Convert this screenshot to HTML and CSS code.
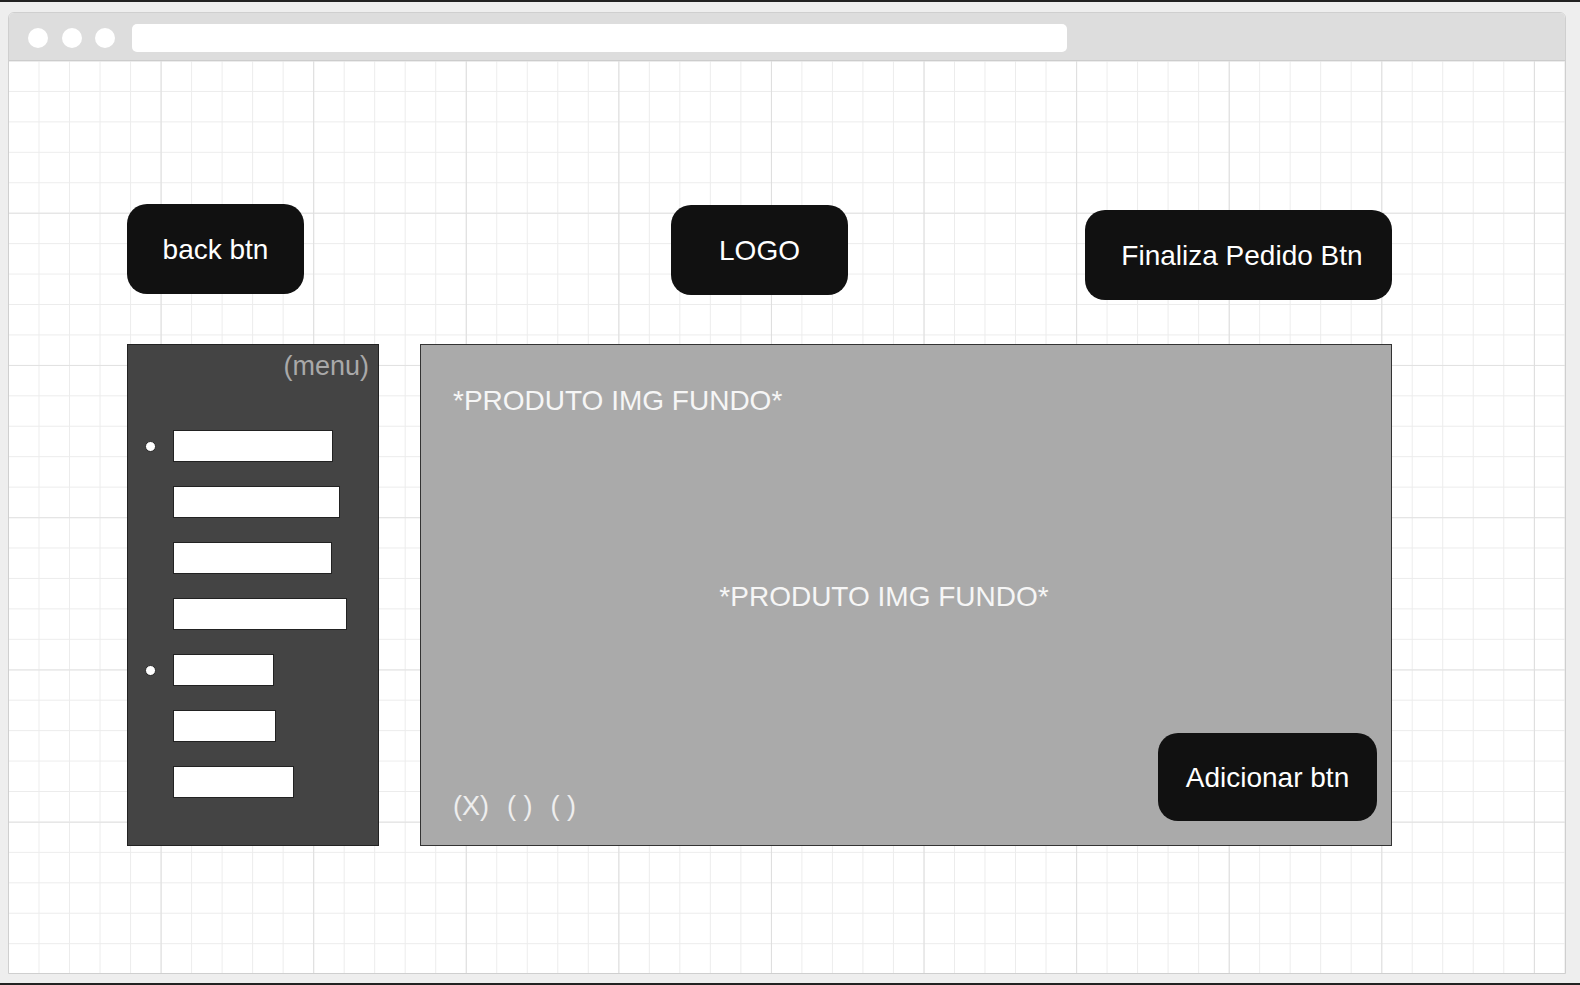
FILE: index.html
```html
<!DOCTYPE html>
<html lang="pt">
<head>
<meta charset="utf-8">
<title>Wireframe</title>
<link rel="stylesheet" href="styles.css">
</head>
<body>
<div class="screen">
  <div class="window">
    <div class="titlebar">
      <span class="light"></span>
      <span class="light"></span>
      <span class="light"></span>
      <div class="address"></div>
    </div>
    <div class="canvas">
      <header class="topbar">
        <div class="btn btn-back">back btn</div>
        <div class="btn btn-logo">LOGO</div>
        <div class="btn btn-finish">Finaliza Pedido Btn</div>
      </header>
      <main class="main">
        <aside class="menu">
          <div class="menu-title">(menu)</div>
          <ul class="menu-list">
            <li class="menu-row"><span class="bullet"></span><span class="bar w1"></span></li>
            <li class="menu-row"><span class="no-bullet"></span><span class="bar w2"></span></li>
            <li class="menu-row"><span class="no-bullet"></span><span class="bar w3"></span></li>
            <li class="menu-row"><span class="no-bullet"></span><span class="bar w4"></span></li>
            <li class="menu-row"><span class="bullet"></span><span class="bar w5"></span></li>
            <li class="menu-row"><span class="no-bullet"></span><span class="bar w6"></span></li>
            <li class="menu-row"><span class="no-bullet"></span><span class="bar w7"></span></li>
          </ul>
        </aside>
        <section class="product">
          <div class="product-title">*PRODUTO IMG FUNDO*</div>
          <div class="product-center">*PRODUTO IMG FUNDO*</div>
          <div class="product-bottom">
            <div class="options"><span>(X)</span><span>( )</span><span>( )</span></div>
            <div class="btn btn-add">Adicionar btn</div>
          </div>
        </section>
      </main>
    </div>
  </div>
</div>
</body>
</html>
```

FILE: styles.css
```css
html, body {
  margin: 0;
  padding: 0;
}

body {
  background: #eeeeee;
  font-family: "Liberation Sans", Arial, sans-serif;
}

.screen {
  width: 1580px;
  height: 985px;
  box-sizing: border-box;
  border-top: 2px solid #222222;
  border-bottom: 2px solid #222222;
  background: #eeeeee;
  padding: 10px 0 0 8px;
}

.window {
  width: 1558px;
  height: 962px;
  box-sizing: border-box;
  border: 1px solid #cfcfcf;
  border-radius: 6px 6px 0 0;
  display: flex;
  flex-direction: column;
  background: #ffffff;
  overflow: hidden;
}

.titlebar {
  height: 48px;
  box-sizing: border-box;
  flex: none;
  background: #dddddd;
  border-bottom: 1px solid #cccccc;
  display: flex;
  align-items: center;
  padding: 3px 0 0 19px;
}

.light {
  width: 20px;
  height: 20px;
  border-radius: 50%;
  background: #ffffff;
  margin-right: 13.5px;
  flex: none;
}

.light:nth-of-type(3) {
  margin-right: 17px;
}

.address {
  width: 935px;
  height: 28px;
  background: #ffffff;
  border-radius: 5px;
}

.canvas {
  flex: 1;
  background-color: #ffffff;
  background-image:
    linear-gradient(to right, #dedede 1px, transparent 1px),
    linear-gradient(to bottom, #e2e2e2 1px, transparent 1px),
    linear-gradient(to right, #ececec 1px, transparent 1px),
    linear-gradient(to bottom, #ececec 1px, transparent 1px);
  background-size:
    152.6px 100%,
    100% 152.25px,
    30.52px 100%,
    100% 30.45px;
  background-position:
    -1px 0,
    0 -0.5px,
    -1px 0,
    0 -0.5px;
  padding: 143px 173px 0 118px;
}

.topbar {
  display: grid;
  grid-template-columns: 1fr auto 1fr;
  align-items: start;
}

.btn {
  background: #111111;
  color: #ffffff;
  border-radius: 20px;
  font-size: 28px;
  line-height: 32px;
  display: flex;
  align-items: center;
  justify-content: center;
  box-sizing: border-box;
  padding-top: 2px;
  white-space: nowrap;
}

.btn-back {
  justify-self: start;
  width: 177px;
  height: 90px;
}

.btn-logo {
  justify-self: center;
  width: 177px;
  height: 90px;
  margin-top: 1px;
}

.btn-finish {
  justify-self: end;
  width: 307px;
  height: 90px;
  margin-top: 6px;
  padding-left: 7px;
}

.main {
  display: flex;
  gap: 41px;
  margin-top: 44px;
  height: 502px;
}

.menu {
  width: 252px;
  flex: none;
  box-sizing: border-box;
  background: #444444;
  border: 1px solid #222222;
  padding: 6px 9px 0 0;
}

.menu-title {
  text-align: right;
  color: #a9a9a9;
  font-size: 27px;
  line-height: 31px;
}

.menu-list {
  list-style: none;
  margin: 48px 0 0 0;
  padding: 0;
  display: flex;
  flex-direction: column;
  gap: 24px;
}

.menu-row {
  display: grid;
  grid-template-columns: 45px auto;
  align-items: center;
  height: 32px;
}

.bullet {
  justify-self: center;
  width: 11px;
  height: 11px;
  box-sizing: border-box;
  border-radius: 50%;
  background: #ffffff;
  border: 1px solid #2a2a2a;
}

.bar {
  display: block;
  height: 32px;
  box-sizing: border-box;
  background: #ffffff;
  border: 1px solid #222222;
}

.w1 { width: 160px; }
.w2 { width: 167px; }
.w3 { width: 159px; }
.w4 { width: 174px; }
.w5 { width: 101px; }
.w6 { width: 103px; }
.w7 { width: 121px; }

.product {
  flex: 1;
  box-sizing: border-box;
  background: #aaaaaa;
  border: 1px solid #333333;
  display: grid;
  grid-template-columns: 1fr;
  grid-template-rows: 1fr;
}

.product-title,
.product-center,
.product-bottom {
  grid-area: 1 / 1;
}

.product-title {
  align-self: start;
  padding: 40px 32px 0;
  color: #f6f6f6;
  font-size: 28px;
  line-height: 32px;
}

.product-center {
  align-self: center;
  justify-self: center;
  margin: 4px 44px 0 0;
  color: #f6f6f6;
  font-size: 28px;
  line-height: 32px;
}

.product-bottom {
  align-self: end;
  display: flex;
  justify-content: space-between;
  align-items: flex-end;
  padding: 0 14px 24px 32px;
}

.options {
  display: flex;
  gap: 18px;
  color: #eeeeee;
  font-size: 27px;
  line-height: 32px;
  margin-bottom: -1px;
  white-space: pre;
}

.btn-add {
  width: 219px;
  height: 88px;
}
```
